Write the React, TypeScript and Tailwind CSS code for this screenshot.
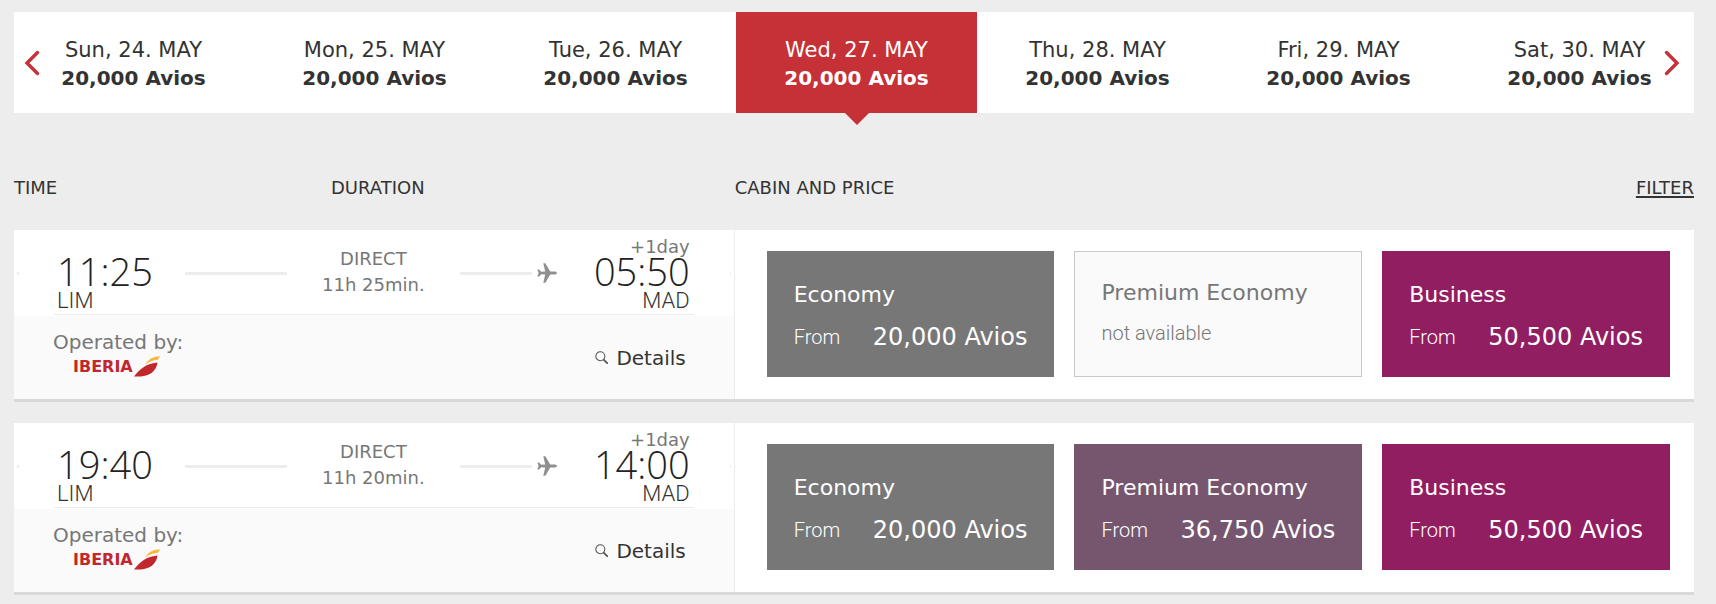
import React, { useState } from 'react'

type Cabin = { name: string; price: string | null; color: string }

type Flight = {
  id: string
  departure: string
  arrival: string
  duration: string
  cabins: Cabin[]
}

const days = [
  'Sun, 24. MAY',
  'Mon, 25. MAY',
  'Tue, 26. MAY',
  'Wed, 27. MAY',
  'Thu, 28. MAY',
  'Fri, 29. MAY',
  'Sat, 30. MAY',
]

const flights: Flight[] = [
  {
    id: 'f1',
    departure: '11:25',
    arrival: '05:50',
    duration: '11h 25min.',
    cabins: [
      { name: 'Economy', price: '20,000 Avios', color: 'bg-[#777777]' },
      { name: 'Premium Economy', price: null, color: '' },
      { name: 'Business', price: '50,500 Avios', color: 'bg-[#921e62]' },
    ],
  },
  {
    id: 'f2',
    departure: '19:40',
    arrival: '14:00',
    duration: '11h 20min.',
    cabins: [
      { name: 'Economy', price: '20,000 Avios', color: 'bg-[#777777]' },
      { name: 'Premium Economy', price: '36,750 Avios', color: 'bg-[#76566f]' },
      { name: 'Business', price: '50,500 Avios', color: 'bg-[#921e62]' },
    ],
  },
]

function Chevron({ flip = false }: { flip?: boolean }) {
  return (
    <svg viewBox="0 0 16 26" className={flip ? 'w-4 h-[26px] rotate-180' : 'w-4 h-[26px]'} fill="none" aria-hidden="true">
      <path d="M13.500 2.500 3 13l10.500 10.500" stroke="#c63137" strokeWidth="3.400" strokeLinecap="round" strokeLinejoin="miter" />
    </svg>
  )
}

function Plane() {
  return (
    <svg viewBox="0 0 20 20" className="w-5 h-5" fill="#8f8f8f" aria-hidden="true">
      <path d="M20 10c0-.9-1.400-1.500-2.600-1.500h-4.200L8.400.2H6.300l1.900 8.300-3.900.3L2 6.400H.4L1.600 10 .4 13.600H2l2.300-2.400 3.900.3-1.900 8.300h2.100l4.800-8.300h4.200c1.200 0 2.600-.6 2.600-1.500z" />
    </svg>
  )
}

function IberiaLogo() {
  return (
    <div className="flex items-center ml-5">
      <span className="text-base leading-5 font-bold text-[#c1272d]">IBERIA</span>
      <svg viewBox="0 0 26 21" className="w-[26px] h-[21px] ml-px" aria-hidden="true">
        <path d="M0 20.500C4.500 14.500 11 7.500 23.500 6.500c-.4 3.500-2 7.300-5.600 10.200C13.700 20 7 20.800 0 20.500z" fill="#c1272d" />
        <path d="M11 8.800C14 3.800 18 .8 26 .3c-.5 1.300-1.200 2.500-2.100 3.500C19 4.200 15 5.900 11 8.800z" fill="#f6b93b" />
      </svg>
    </div>
  )
}

function SearchIcon() {
  return (
    <svg viewBox="0 0 13 13" className="w-[13px] h-[13px]" fill="none" stroke="#555" aria-hidden="true">
      <circle cx="5.300" cy="5.300" r="4.500" strokeWidth="1.100" />
      <path d="m8.600 8.600 3.600 3.600" strokeWidth="1.800" strokeLinecap="round" />
    </svg>
  )
}

function CabinTile({ cabin }: { cabin: Cabin }) {
  if (!cabin.price) {
    return (
      <div className="px-[26px] pt-[27px] border border-[#c8c8c8] bg-[#fafafa] text-[#777777]">
        <p className="text-[22px] leading-7">{cabin.name}</p>
        <p className="mt-3 font-['Roboto',sans-serif] font-light text-[20px] leading-7">not available</p>
      </div>
    )
  }
  return (
    <button type="button" className={`block px-[27px] pt-[30px] pb-[26px] text-left text-white ${cabin.color}`}>
      <span className="block text-[22px] leading-7">{cabin.name}</span>
      <span className="flex justify-between mt-3.5">
        <span className="font-['Roboto',sans-serif] font-light text-[20px] leading-7">From</span>
        <span className="text-2xl leading-7">{cabin.price}</span>
      </span>
    </button>
  )
}

function FlightCard({ flight }: { flight: Flight }) {
  return (
    <article className="grid grid-cols-[429fr_571fr] bg-white border-b-3 border-[#d9d9d9]">
      <div className="flex flex-col border-r border-[#ececec]">
        <div className="flex items-center pt-0.5">
          <span className="ml-[3px] mr-[38px] w-0.5 h-[3px] bg-[#ededed]" />
          <div className="w-32 pt-[25px] pb-px">
            <p className="mb-1 font-['Open_Sans',sans-serif] font-light text-[38px] leading-7 text-[#222]">{flight.departure}</p>
            <p className="font-['Roboto',sans-serif] font-light text-[22px] leading-6">LIM</p>
          </div>
          <span className="w-[102px] h-[3px] bg-[#ededed]" />
          <div className="flex-1 pb-0.5 text-center text-lg leading-[26px] text-[#777777]">
            <p>DIRECT</p>
            <p>{flight.duration}</p>
          </div>
          <span className="w-[72px] h-[3px] mr-[5px] bg-[#ededed]" />
          <Plane />
          <div className="w-[133px] mr-10 pt-[5px] pb-px text-right">
            <p className="text-lg leading-5 text-[#777777]">+1day</p>
            <p className="mb-1 font-['Open_Sans',sans-serif] font-light text-[38px] leading-7 text-[#222]">{flight.arrival}</p>
            <p className="font-['Roboto',sans-serif] font-light text-[22px] leading-6">MAD</p>
          </div>
          <span className="w-px h-[3px] mr-[3px] bg-[#ededed]" />
        </div>
        <div className="h-px mx-10 mb-px bg-[#ececec]" />
        <div className="flex-1 flex justify-between pl-[39px] pr-12 bg-[#fafafa]">
          <div className="pt-3">
            <p className="text-xl leading-7 text-[#777777]">Operated by:</p>
            <IberiaLogo />
          </div>
          <button type="button" className="flex items-center gap-2 text-xl leading-7">
            <SearchIcon />
            Details
          </button>
        </div>
      </div>
      <div className="grid grid-cols-3 gap-5 pt-[21px] pb-[22px] pl-8 pr-6">
        {flight.cabins.map((c) => (
          <CabinTile key={c.name} cabin={c} />
        ))}
      </div>
    </article>
  )
}

export default function App() {
  const [selected, setSelected] = useState('Wed, 27. MAY')

  return (
    <main className="min-h-screen pt-3 pb-2 pl-3.5 pr-[22px] bg-[#ededed] font-['DejaVu_Sans',Verdana,sans-serif] text-[#333]">
      {/* Day selector */}
      <nav className="relative bg-white" aria-label="Departure day">
        <div className="grid grid-cols-7 -ml-px -mr-1.5">
          {days.map((day) => (
            <button
              key={day}
              type="button"
              onClick={() => setSelected(day)}
              className={`relative pt-6 pb-[21px] leading-7 ${day === selected ? 'bg-[#c63137] text-white' : ''}`}
            >
              <span className="block text-[21px] leading-7">{day}</span>
              <span className="block text-xl leading-7 font-bold">20,000 Avios</span>
              {day === selected && (
                <span className="absolute top-full left-1/2 -translate-x-1/2 border-x-12 border-t-12 border-x-transparent border-t-[#c63137]" />
              )}
            </button>
          ))}
        </div>
        <button type="button" aria-label="Previous days" className="absolute left-2.5 top-1/2 -translate-y-1/2">
          <Chevron />
        </button>
        <button type="button" aria-label="Next days" className="absolute right-3.5 top-1/2 -translate-y-1/2">
          <Chevron flip />
        </button>
      </nav>

      <div className="grid grid-cols-[429fr_571fr] mt-[62px] mb-[29px] text-lg leading-[26px]">
        <div className="flex">
          <span className="w-[317px]">TIME</span>
          <span>DURATION</span>
        </div>
        <div className="flex justify-between">
          <span>CABIN AND PRICE</span>
          <a href="#filter" className="underline decoration-2 underline-offset-2">FILTER</a>
        </div>
      </div>

      <section className="flex flex-col gap-[21px]">
        {flights.map((f) => (
          <FlightCard key={f.id} flight={f} />
        ))}
      </section>
    </main>
  )
}
